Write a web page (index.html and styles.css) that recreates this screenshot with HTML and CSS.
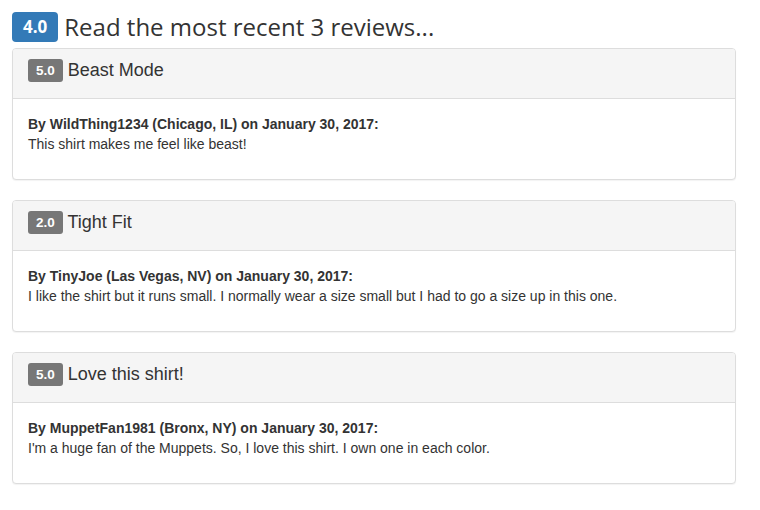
FILE: index.html
```html
<!DOCTYPE html>
<html lang="en">
<head>
    <meta charset="UTF-8">
    <meta name="viewport" content="width=device-width, initial-scale=1.0">
    <title>Reviews</title>
    <link rel="stylesheet" href="styles.css">
</head>
<body>
    <div class="reviews">
        <h2 class="reviews-title"><span class="badge badge-blue">4.0</span> Read the most recent 3 reviews...</h2>

        <div class="panel">
            <div class="panel-heading">
                <h3 class="panel-title"><span class="badge">5.0</span> Beast Mode</h3>
            </div>
            <div class="panel-body">
                <p><b>By WildThing1234 (Chicago, IL) on January 30, 2017:</b><br>This shirt makes me feel like beast!</p>
            </div>
        </div>

        <div class="panel">
            <div class="panel-heading">
                <h3 class="panel-title"><span class="badge">2.0</span> Tight Fit</h3>
            </div>
            <div class="panel-body">
                <p><b>By TinyJoe (Las Vegas, NV) on January 30, 2017:</b><br>I like the shirt but it runs small. I normally wear a size small but I had to go a size up in this one.</p>
            </div>
        </div>

        <div class="panel">
            <div class="panel-heading">
                <h3 class="panel-title"><span class="badge">5.0</span> Love this shirt!</h3>
            </div>
            <div class="panel-body">
                <p><b>By MuppetFan1981 (Bronx, NY) on January 30, 2017:</b><br>I'm a huge fan of the Muppets. So, I love this shirt. I own one in each color.</p>
            </div>
        </div>
    </div>
</body>
</html>
```

FILE: styles.css
```css
body {
    margin: 0;
    font-family: "Liberation Sans", Arial, sans-serif;
    font-size: 14px;
    line-height: 20px;
    color: #333;
    background: #fff;
}

.reviews {
    width: 724px;
    padding: 12px;
}

.reviews-title {
    display: flex;
    align-items: center;
    height: 30px;
    margin: 0 0 6px 0;
    font-family: "Open Sans", sans-serif;
    font-weight: 400;
    font-size: 24px;
    color: #333;
}

.badge {
    display: inline-block;
    height: 23px;
    line-height: 23px;
    padding: 0 8px;
    vertical-align: top;
    background-color: #777;
    color: #fff;
    font-weight: bold;
    font-size: 13.5px;
    border-radius: 3px;
}

.badge-blue {
    height: 30px;
    line-height: 30px;
    padding: 0 11px;
    margin-right: 6px;
    background-color: #337ab7;
    font-family: "Open Sans", sans-serif;
    font-size: 17px;
    border-radius: 4px;
}

.panel {
    margin-bottom: 20px;
    background-color: #fff;
    border: 1px solid #ddd;
    border-radius: 4px;
    box-shadow: 0 1px 1px rgba(0, 0, 0, 0.05);
}

.panel-heading {
    padding: 10px 15px 16px 15px;
    background-color: #f5f5f5;
    border-bottom: 1px solid #ddd;
    border-radius: 3px 3px 0 0;
}

.panel-title {
    margin: 0;
    font-weight: 400;
    font-size: 18px;
    line-height: 23px;
}

.panel-body {
    padding: 15px;
}

.panel-body p {
    margin: 0 0 10px 0;
}
```
